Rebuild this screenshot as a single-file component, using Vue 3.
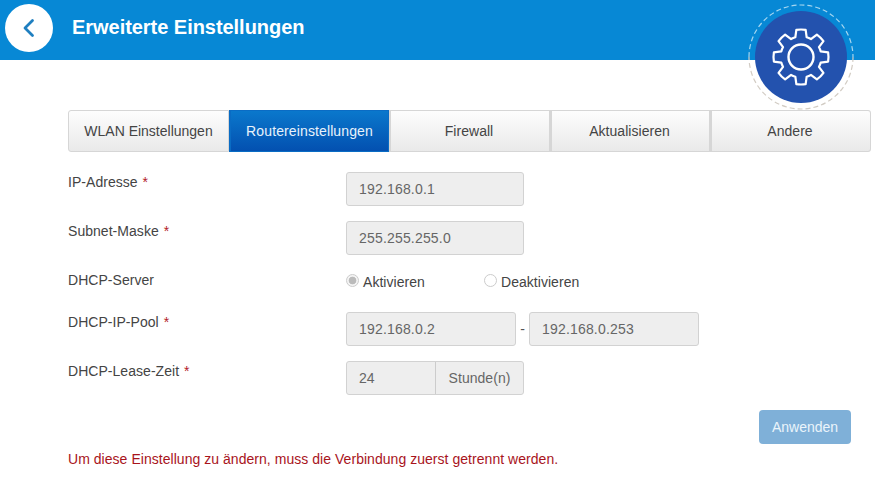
<script setup>
const tabs = [
  { label: 'WLAN Einstellungen' },
  { label: 'Routereinstellungen', active: true },
  { label: 'Firewall' },
  { label: 'Aktualisieren' },
  { label: 'Andere' }
]

const gearPath = (() => {
  const teeth = 8
  const R = 27.5
  const r = 20.5
  const pt = (a, rad) => (32 + rad * Math.cos(a)).toFixed(2) + ' ' + (32 + rad * Math.sin(a)).toFixed(2)
  let d = ''
  for (let i = 0; i < teeth; i++) {
    const a = (i * 2 * Math.PI) / teeth - Math.PI / 2
    const seg = [
      pt(a - 0.28, r),
      pt(a - 0.17, R),
      pt(a + 0.17, R),
      pt(a + 0.28, r)
    ]
    d += (i === 0 ? 'M' : 'L') + seg[0] + 'L' + seg[1]
    d += 'A' + R + ' ' + R + ' 0 0 1 ' + seg[2] + 'L' + seg[3]
    const next = pt(a + (2 * Math.PI) / teeth - 0.28, r)
    d += 'A' + r + ' ' + r + ' 0 0 1 ' + next
  }
  return d + 'Z'
})()
</script>

<template>
  <div class="page">
    <header class="topbar">
      <button class="back" aria-label="Zurück">
        <svg width="16" height="20" viewBox="0 0 16 20">
          <path d="M11.5 2.5 L4 10 L11.5 17.5" fill="none" stroke="#1f7fc0" stroke-width="2.8" stroke-linecap="round" stroke-linejoin="round" />
        </svg>
      </button>
      <h1 class="title">Erweiterte Einstellungen</h1>
    </header>

    <div class="badge">
      <svg width="106" height="106" viewBox="0 0 106 106" class="ring">
        <path d="M1 53 A52 52 0 0 1 105 53" fill="none" stroke="#a5d6f0" stroke-width="1.2" stroke-dasharray="5 3" />
        <path d="M105 53 A52 52 0 0 1 1 53" fill="none" stroke="#d2ccc4" stroke-width="1.2" stroke-dasharray="5 3" />
      </svg>
      <div class="disc">
        <svg width="64" height="64" viewBox="0 0 64 64">
          <path :d="gearPath" fill="none" stroke="#fff" stroke-width="2.2" stroke-linejoin="round" />
          <circle cx="32" cy="32" r="12.5" fill="none" stroke="#fff" stroke-width="2.4" />
        </svg>
      </div>
    </div>

    <main class="content">
      <nav class="tabs">
        <div v-for="t in tabs" :key="t.label" class="tab" :class="{ active: t.active }">{{ t.label }}</div>
      </nav>

      <form class="form" @submit.prevent>
        <div class="row">
          <label class="label">IP-Adresse <span class="req">*</span></label>
          <div class="field wide">192.168.0.1</div>
        </div>
        <div class="row">
          <label class="label">Subnet-Maske <span class="req">*</span></label>
          <div class="field wide">255.255.255.0</div>
        </div>
        <div class="row radio-row">
          <label class="label">DHCP-Server</label>
          <div class="radios">
            <span class="radio-item"><i class="radio on"></i>Aktivieren</span>
            <span class="radio-item"><i class="radio"></i>Deaktivieren</span>
          </div>
        </div>
        <div class="row">
          <label class="label">DHCP-IP-Pool <span class="req">*</span></label>
          <div class="field pool">192.168.0.2</div>
          <span class="dash">-</span>
          <div class="field pool">192.168.0.253</div>
        </div>
        <div class="row">
          <label class="label">DHCP-Lease-Zeit <span class="req">*</span></label>
          <div class="group">
            <span class="group-value">24</span>
            <span class="group-unit">Stunde(n)</span>
          </div>
        </div>
        <div class="actions">
          <button class="apply" disabled>Anwenden</button>
        </div>
      </form>

      <p class="note">Um diese Einstellung zu ändern, muss die Verbindung zuerst getrennt werden.</p>
    </main>
  </div>
</template>

<style>
html, body { margin: 0; background: #fff; }
</style>

<style scoped>
.page {
  position: relative;
  width: 875px;
  height: 489px;
  overflow: hidden;
  background: #fff;
  font-family: "Liberation Sans", Arial, sans-serif;
  font-size: 14px;
  letter-spacing: 0.04px;
  color: #555;
}
.topbar {
  height: 60px;
  box-sizing: border-box;
  background: #0788d5;
  display: flex;
  align-items: flex-start;
  padding: 4px 0 0 5px;
}
.back {
  width: 48px;
  height: 48px;
  padding: 0;
  border: 0;
  border-radius: 50%;
  background: #fff;
  display: flex;
  align-items: center;
  justify-content: center;
}
.title {
  margin: 0 0 0 19px;
  font-size: 20px;
  letter-spacing: -0.04px;
  line-height: 46px;
  font-weight: 700;
  color: #fff;
}
.badge {
  position: absolute;
  left: 748px;
  top: 4px;
  width: 106px;
  height: 106px;
  display: flex;
  align-items: center;
  justify-content: center;
}
.ring { position: absolute; left: 0; top: 0; }
.disc {
  width: 92px;
  height: 92px;
  border-radius: 50%;
  background: #2352ae;
  display: flex;
  align-items: center;
  justify-content: center;
  position: relative;
}
.content { padding: 50px 4px 0 68px; }
.tabs {
  display: grid;
  grid-template-columns: 161px 160px 161px 160px 1fr;
  height: 42px;
}
.tab {
  box-sizing: border-box;
  display: flex;
  align-items: center;
  justify-content: center;
  padding-right: 2px;
  border: 1px solid #d6d6d6;
  border-left-width: 2px;
  background: linear-gradient(#fdfdfd, #e9e9e9);
  color: #444;
}
.tab:first-child { padding-right: 0; border-left-width: 1px; border-radius: 3px 0 0 3px; letter-spacing: 0; }
.tab:last-child { border-radius: 0 3px 3px 0; }
.tab.active {
  padding-right: 0;
  letter-spacing: 0.12px;
  background: linear-gradient(#0a78cc, #0350b0);
  border-color: #0a6cc4;
  color: #e8f2fb;
}
.form { display: flex; flex-direction: column; margin-top: 20px; width: 783px; }
.row {
  display: flex;
  align-items: flex-start;
  margin-bottom: 15px;
}
.radio-row { margin-bottom: 22px; height: 20px; }
.label {
  width: 278px;
  flex: none;
  line-height: 20px;
  color: #444;
}
.req { color: #b3202a; margin-left: 1px; }
.field {
  box-sizing: border-box;
  height: 34px;
  line-height: 32px;
  padding: 0 12px;
  border: 1px solid #d2d2d2;
  border-radius: 3px;
  background: #eee;
  color: #666;
  letter-spacing: 0.18px;
}
.wide { width: 178px; }
.pool { width: 170px; }
.dash { width: 13px; text-align: center; line-height: 34px; color: #555; }
.radios { display: flex; line-height: 24px; color: #444; }
.radio-item { display: flex; align-items: center; width: 138px; }
.radio {
  box-sizing: border-box;
  width: 13px;
  height: 13px;
  margin-right: 4px;
  border: 1px solid #ccc;
  border-radius: 50%;
  background: #fff;
  margin-top: -3px;
}
.radio.on { background: radial-gradient(circle, #bbb 0 3.5px, #f4f4f4 4.2px); }
.group {
  box-sizing: border-box;
  display: flex;
  width: 178px;
  height: 34px;
  line-height: 32px;
  border: 1px solid #d2d2d2;
  border-radius: 3px;
  background: #eee;
  color: #666;
}
.group-value { width: 88px; padding-left: 12px; box-sizing: border-box; }
.group-unit {
  flex: 1;
  text-align: center;
  border-left: 1px solid #ccc;
}
.actions { display: flex; justify-content: flex-end; }
.apply {
  width: 92px;
  height: 34px;
  padding: 0;
  border: 0;
  border-radius: 4px;
  background: #7fb0d8;
  color: #eaf4fb;
  font: inherit;
}
.note {
  margin: 6px 0 0;
  color: #a8141c;
  line-height: 18px;
}
</style>
